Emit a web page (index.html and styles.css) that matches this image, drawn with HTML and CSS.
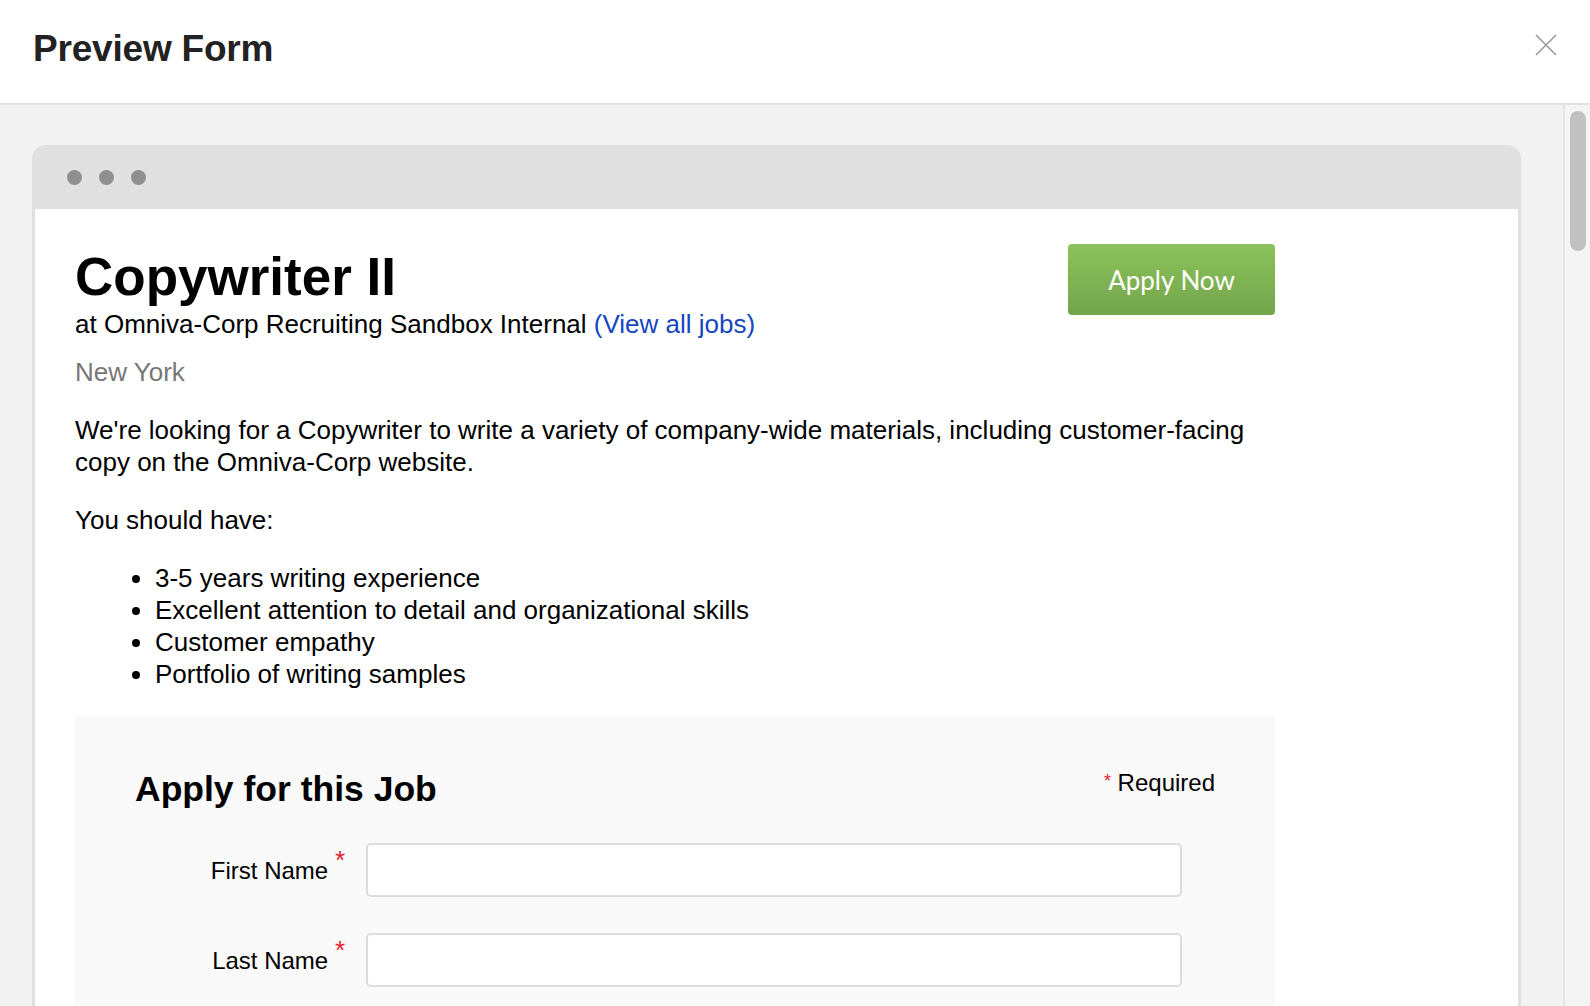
FILE: index.html
```html
<!DOCTYPE html>
<html lang="en">
<head>
    <meta charset="UTF-8">
    <meta name="viewport" content="width=device-width, initial-scale=1.0">
    <title>Preview Form</title>
    <link rel="stylesheet" href="styles.css">
</head>
<body>
    <div class="modal">
        <header class="modal-header">
            <h1>Preview Form</h1>
            <button class="close" aria-label="Close">
                <svg width="22" height="22" viewBox="0 0 22 22">
                    <path d="M1 1 L21 21 M21 1 L1 21" stroke="#9a9a9a" stroke-width="1.6" fill="none"/>
                </svg>
            </button>
        </header>

        <div class="modal-body">
            <div class="scroll-area">
                <div class="browser">
                    <div class="browser-bar">
                        <span class="dot"></span>
                        <span class="dot"></span>
                        <span class="dot"></span>
                    </div>
                    <div class="browser-page">
                        <div class="job">
                            <div class="job-head">
                                <div class="job-info">
                                    <h2 class="job-title">Copywriter II</h2>
                                    <div class="company">at Omniva-Corp Recruiting Sandbox Internal <a href="#">(View all jobs)</a></div>
                                    <div class="location">New York</div>
                                </div>
                                <a class="apply-btn" href="#">Apply Now</a>
                            </div>

                            <p>We're looking for a Copywriter to write a variety of company-wide materials, including customer-facing copy on the Omniva-Corp website.</p>
                            <p>You should have:</p>
                            <ul>
                                <li>3-5 years writing experience</li>
                                <li>Excellent attention to detail and organizational skills</li>
                                <li>Customer empathy</li>
                                <li>Portfolio of writing samples</li>
                            </ul>

                            <div class="application">
                                <div class="app-head">
                                    <h3>Apply for this Job</h3>
                                    <span class="required-note"><span class="star">*</span> Required</span>
                                </div>
                                <div class="field">
                                    <label for="firstName">First Name <span class="star">*</span></label>
                                    <input type="text" id="firstName">
                                </div>
                                <div class="field">
                                    <label for="lastName">Last Name <span class="star">*</span></label>
                                    <input type="text" id="lastName">
                                </div>
                            </div>
                        </div>
                    </div>
                </div>
            </div>
            <div class="scrollbar">
                <div class="thumb"></div>
            </div>
        </div>
    </div>
</body>
</html>
```

FILE: styles.css
```css
body {
    margin: 0;
    height: 100vh;
    overflow: hidden;
    font-family: 'Liberation Sans', Arial, sans-serif;
    color: #000;
}

.modal {
    height: 100vh;
    display: flex;
    flex-direction: column;
}

.modal-header {
    height: 105px;
    flex-shrink: 0;
    box-sizing: border-box;
    border-bottom: 2px solid #e2e2e2;
    background: #fff;
    display: flex;
    align-items: center;
    justify-content: space-between;
    padding: 0 33px 6px 33px;
}

.modal-header h1 {
    margin: 0;
    font-size: 37px;
    font-weight: bold;
    color: #222;
    letter-spacing: -0.2px;
}

.close {
    background: none;
    border: none;
    padding: 0;
    margin-top: -8px;
    cursor: pointer;
    display: flex;
}

.modal-body {
    flex: 1;
    display: flex;
    overflow: hidden;
    background: #f2f2f2;
}

.scroll-area {
    flex: 1;
    padding: 40px 42px 0 32px;
    overflow: hidden;
}

.browser {
    background: #e0e0e0;
    border-radius: 14px 14px 0 0;
    padding: 0 3px;
    min-height: 1000px;
}

.browser-bar {
    height: 64px;
    display: flex;
    align-items: center;
    gap: 17px;
    padding-left: 32px;
}

.dot {
    width: 15px;
    height: 15px;
    border-radius: 50%;
    background: #8f8f8f;
}

.browser-page {
    background: #fff;
    min-height: 1000px;
    padding: 39px 40px 0;
}

.job {
    width: 1200px;
    font-size: 26px;
    line-height: 32px;
}

.job-head {
    display: flex;
    justify-content: space-between;
    align-items: flex-start;
}

.job-title {
    margin: 0;
    font-size: 53px;
    line-height: 58px;
    font-weight: bold;
}

.company {
    margin-top: 2px;
}

.company a {
    color: #1546c0;
    text-decoration: none;
}

.location {
    margin-top: 16px;
    color: #777;
}

.apply-btn {
    margin-top: -4px;
    width: 207px;
    height: 71px;
    display: flex;
    align-items: center;
    justify-content: center;
    border-radius: 4px;
    background: linear-gradient(#8cc25a, #72a54c);
    color: #fff;
    font-family: Lato, 'Open Sans', sans-serif;
    font-size: 26px;
    text-decoration: none;
}

p {
    margin: 26px 0;
}

ul {
    margin: 26px 0;
    padding-left: 80px;
}

.application {
    margin-top: 26px;
    background: #f9f9f9;
    padding: 51px 60px 40px;
    font-size: 24px;
}

.app-head {
    display: flex;
    justify-content: space-between;
    align-items: flex-start;
    margin-bottom: 32px;
}

.app-head h3 {
    margin: 0;
    font-size: 35.5px;
    line-height: 44px;
    font-weight: bold;
}

.required-note {
    line-height: 32px;
}

.star {
    color: #e0202c;
    position: relative;
}

.required-note .star {
    font-size: 18px;
    top: -4px;
}

.field {
    display: flex;
    align-items: center;
    margin-bottom: 36px;
}

.field label {
    width: 231px;
    flex-shrink: 0;
    box-sizing: border-box;
    padding-right: 21px;
    text-align: right;
    line-height: 32px;
}

.field label .star {
    font-size: 26px;
    top: -10px;
}

.field input {
    width: 816px;
    height: 54px;
    box-sizing: border-box;
    border: 2px solid #dcdcdc;
    border-radius: 5px;
    background: #fff;
    font-size: 24px;
    padding: 0 12px;
}

.scrollbar {
    width: 27px;
    flex-shrink: 0;
    box-sizing: border-box;
    border-left: 2px solid #e4e4e4;
    background: #f4f4f4;
    padding: 6px 4px 0 5px;
}

.thumb {
    height: 140px;
    border-radius: 8px;
    background: #c1c1c1;
}
```
